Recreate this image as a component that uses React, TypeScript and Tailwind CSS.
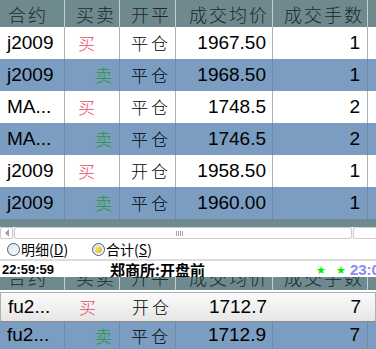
import React from 'react';

type Row = {
  code: string;
  side: '买' | '卖';
  kind: string;
  price: string;
  qty: string;
};

const rows: Row[] = [
  { code: 'j2009', side: '买', kind: '平仓', price: '1967.50', qty: '1' },
  { code: 'j2009', side: '卖', kind: '平仓', price: '1968.50', qty: '1' },
  { code: 'MA...', side: '买', kind: '平仓', price: '1748.5', qty: '2' },
  { code: 'MA...', side: '卖', kind: '平仓', price: '1746.5', qty: '2' },
  { code: 'j2009', side: '买', kind: '开仓', price: '1958.50', qty: '1' },
  { code: 'j2009', side: '卖', kind: '平仓', price: '1960.00', qty: '1' },
];

const cjk = { fontFamily: '"Noto Sans CJK SC", sans-serif' };
const num = { fontFamily: '"Liberation Sans", Arial, sans-serif' };

const Header = () => (
  <div
    className="flex h-[27px] bg-[#6e8a8e] text-[18px] font-light leading-none text-[#1c2828] tracking-[2px]"
    style={cjk}
  >
    <div className="w-[65px] flex items-center pl-[8px] border-r border-[#c2d0d0]">合约</div>
    <div className="w-[55px] flex items-center justify-end pr-[3px] border-r border-[#c2d0d0]">买卖</div>
    <div className="w-[56px] flex items-center justify-end pr-[4px] border-r border-[#c2d0d0]">开平</div>
    <div className="w-[97px] flex items-center justify-end pr-[3px] border-r border-[#c2d0d0]">成交均价</div>
    <div className="w-[95px] flex items-center justify-end pr-[3px] border-r border-[#c2d0d0]">成交手数</div>
    <div className="flex-1" />
  </div>
);

const DataRow = ({ r, blue, h, selected }: { r: Row; blue: boolean; h: string; selected?: boolean }) => {
  const line = selected ? 'border-transparent' : blue ? 'border-[#6f8aa6]' : 'border-[#a8b4b4]';
  const bg = selected
    ? 'bg-gradient-to-b from-[#fbfbfb] to-[#e6e6e6] border border-[#b0b0b0] border-b-[#8a8a8a]'
    : blue
      ? 'bg-[#7b9dc1]'
      : 'bg-white';
  return (
    <div className={`flex ${h} ${bg} text-black`}>
      <div className={`w-[65px] flex items-center pl-[7px] border-r ${line} text-[19px]`} style={num}>
        {r.code}
      </div>
      <div
        className={`w-[55px] flex items-center border-r ${line} text-[17px] font-light ${
          r.side === '买' ? 'pl-[13px] text-[#e84860]' : 'justify-end pr-[7px] text-[#1f9a34]'
        }`}
        style={cjk}
      >
        {r.side}
      </div>
      <div
        className={`w-[56px] flex items-center justify-end pr-[4px] border-r ${line} text-[17px] font-light tracking-[3px]`}
        style={cjk}
      >
        {r.kind}
      </div>
      <div className={`w-[97px] flex items-center justify-end pr-[6px] border-r ${line} text-[19px]`} style={num}>
        {r.price}
      </div>
      <div className={`w-[95px] flex items-center justify-end pr-[7px] border-r ${line} text-[19px]`} style={num}>
        {r.qty}
      </div>
      <div className="flex-1" />
    </div>
  );
};

const Radio = ({ checked, label, hot }: { checked?: boolean; label: string; hot: string }) => (
  <div className="flex items-center gap-[1px] text-[14px] leading-none text-black" style={cjk}>
    <span className="w-[13px] h-[13px] rounded-full border border-[#3d5e8c] bg-gradient-to-br from-[#dfe4ea] to-white flex items-center justify-center">
      {checked && <span className="w-[7px] h-[7px] rounded-full bg-gradient-to-br from-[#fff07a] to-[#e0b400]" />}
    </span>
    <span>
      {label}(<span className="underline">{hot}</span>)
    </span>
  </div>
);

export default function App() {
  return (
    <div className="w-[376px] h-[349px] overflow-hidden bg-white">
      <Header />
      {rows.map((r, i) => (
        <DataRow key={i} r={r} blue={i % 2 === 1} h="h-[32px]" />
      ))}
      <div className="h-[8px] bg-[#6e8a8e]" />

      {/* scrollbar */}
      <div className="h-[12px] flex bg-[#f4f4f4]">
        <div className="w-[13px] border border-[#c8c8c8] rounded-[2px] bg-white flex items-center justify-center">
          <span className="w-0 h-0 border-y-[4px] border-y-transparent border-r-[4px] border-r-[#a0a0a0]" />
        </div>
        <div className="ml-[1px] w-[338px] border border-[#c8c8c8] rounded-[3px] bg-white flex items-center justify-center">
          <div className="flex gap-[1px] ml-[-8px]">
            {[0, 1, 2, 3].map((k) => (
              <span key={k} className="w-[1px] h-[5px] bg-[#a8a8a8]" />
            ))}
          </div>
        </div>
        <div className="ml-[1px] flex-1 border border-r-0 border-[#d0d0d0] rounded-l-[3px] bg-white" />
      </div>

      <div className="h-[20px] flex items-center pl-[7px] gap-[24px] bg-white">
        <Radio label="明细" hot="D" />
        <Radio checked label="合计" hot="S" />
      </div>
      <div className="h-[2px] bg-[#dcdcdc]" />

      {/* status line */}
      <div className="h-[16px] flex items-center bg-white leading-none whitespace-nowrap overflow-hidden">
        <span className="pl-[2px] text-[13px] font-bold text-black" style={num}>
          22:59:59
        </span>
        <span className="ml-[56px] text-[15px] font-bold text-black" style={cjk}>
          郑商所:开盘前
        </span>
        <span className="ml-[111px] text-[11px] text-[#00f000]">★</span>
        <span className="ml-[10px] text-[11px] text-[#00f000]">★</span>
        <span className="ml-[4px] text-[15px] font-bold text-[#8c88f4]" style={num}>
          23:00
        </span>
      </div>

      <div className="h-[15px] overflow-hidden">
        <div className="mt-[-14px]">
          <Header />
        </div>
      </div>
      <DataRow
        r={{ code: 'fu2...', side: '买', kind: '开仓', price: '1712.7', qty: '7' }}
        blue={false}
        selected
        h="h-[30px]"
      />
      <DataRow r={{ code: 'fu2...', side: '卖', kind: '平仓', price: '1712.9', qty: '7' }} blue h="h-[27px]" />
    </div>
  );
}
